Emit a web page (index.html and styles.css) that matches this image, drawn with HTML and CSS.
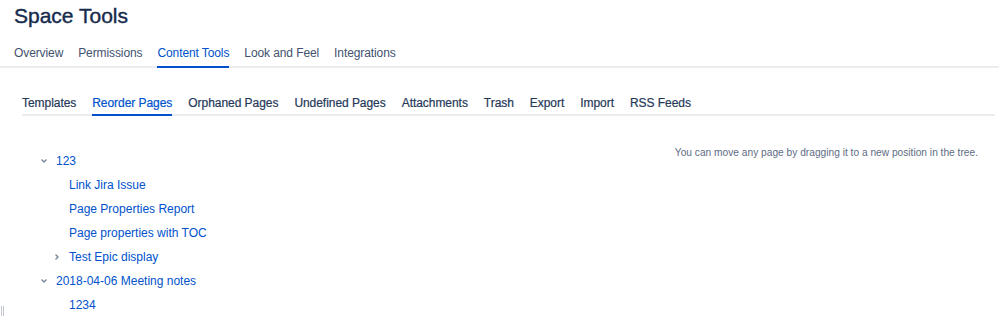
FILE: index.html
```html
<!DOCTYPE html>
<html lang="en">

<head>
    <meta charset="UTF-8">
    <title>Space Tools</title>
    <link rel="stylesheet" href="styles.css">
</head>

<body>
    <h1 class="page-title">Space Tools</h1>

    <!-- 顶部导航 -->
    <ul class="tabs">
        <li class="tab">Overview</li>
        <li class="tab">Permissions</li>
        <li class="tab active">Content Tools</li>
        <li class="tab">Look and Feel</li>
        <li class="tab">Integrations</li>
    </ul>

    <!-- 二级导航 -->
    <ul class="subtabs">
        <li class="subtab">Templates</li>
        <li class="subtab active">Reorder Pages</li>
        <li class="subtab">Orphaned Pages</li>
        <li class="subtab">Undefined Pages</li>
        <li class="subtab">Attachments</li>
        <li class="subtab">Trash</li>
        <li class="subtab">Export</li>
        <li class="subtab">Import</li>
        <li class="subtab">RSS Feeds</li>
    </ul>

    <div class="content">
        <ul class="tree">
            <li class="node depth-0">
                <span class="toggle">
                    <svg width="8" height="8" viewBox="0 0 8 8"><polyline points="1.5,2.5 4,5 6.5,2.5" /></svg>
                </span>
                <a href="#">123</a>
            </li>
            <li class="node depth-1"><span class="toggle"></span><a href="#">Link Jira Issue</a></li>
            <li class="node depth-1"><span class="toggle"></span><a href="#">Page Properties Report</a></li>
            <li class="node depth-1"><span class="toggle"></span><a href="#">Page properties with TOC</a></li>
            <li class="node depth-1">
                <span class="toggle">
                    <svg width="8" height="8" viewBox="0 0 8 8"><polyline points="2.5,1.5 5,4 2.5,6.5" /></svg>
                </span>
                <a href="#">Test Epic display</a>
            </li>
            <li class="node depth-0">
                <span class="toggle">
                    <svg width="8" height="8" viewBox="0 0 8 8"><polyline points="1.5,2.5 4,5 6.5,2.5" /></svg>
                </span>
                <a href="#">2018-04-06 Meeting notes</a>
            </li>
            <li class="node depth-1"><span class="toggle"></span><a href="#">1234</a></li>
        </ul>

        <p class="hint">You can move any page by dragging it to a new position in the tree.</p>
    </div>

    <!-- 左下角拖拽把手 -->
    <div class="grip"></div>
</body>

</html>
```

FILE: styles.css
```css
body {
    font-family: "Liberation Sans", Arial, sans-serif;
    margin: 0;
    background-color: #fff;
    color: #172b4d;
    position: relative;
    min-height: 318px;
}

.page-title {
    margin: 0;
    padding: 3px 14px 0;
    font-size: 21px;
    line-height: 26px;
    font-weight: normal;
    color: #172b4d;
    -webkit-text-stroke: 0.4px #172b4d;
}

.tabs,
.subtabs {
    list-style: none;
    margin: 0;
    padding: 0;
    display: flex;
}

/* 顶部导航 */
.tabs {
    padding: 0 0 0 14px;
    margin-top: 16px;
    gap: 15px;
    box-shadow: inset 0 -2px 0 #ebecf0;
}

.tab {
    font-size: 12px;
    line-height: 16px;
    padding: 0 0 7px;
    color: #42526e;
    letter-spacing: -0.1px;
}

.tab.active {
    color: #0052cc;
    box-shadow: inset 0 -2px 0 #0052cc;
}

/* 二级导航 */
.subtabs {
    margin: 27px 4px 0 22px;
    gap: 16px;
    box-shadow: inset 0 -2px 0 #ebecf0;
}

.subtab {
    font-size: 12px;
    line-height: 16px;
    padding: 0 0 5px;
    color: #253858;
    letter-spacing: -0.05px;
    -webkit-text-stroke: 0.2px #253858;
}

.subtab.active {
    color: #0052cc;
    -webkit-text-stroke: 0.2px #0052cc;
    box-shadow: inset 0 -2px 0 #0052cc;
}

.content {
    display: flex;
    justify-content: space-between;
    align-items: flex-start;
    padding: 33px 21px 0 0;
}

.tree {
    list-style: none;
    margin: 0;
    padding: 0;
}

.node {
    display: flex;
    align-items: center;
    height: 24px;
    font-size: 12px;
}

.node.depth-0 {
    padding-left: 38px;
}

.node.depth-1 {
    padding-left: 51px;
}

.toggle {
    width: 12px;
    height: 12px;
    margin-right: 6px;
    display: flex;
    align-items: center;
    justify-content: center;
}

.toggle svg polyline {
    fill: none;
    stroke: #7a869a;
    stroke-width: 1.4;
}

.node a {
    color: #0052cc;
    text-decoration: none;
}

.hint {
    margin: -3px 0 0;
    font-size: 10.2px;
    line-height: 14px;
    color: #5e6c84;
}

.grip {
    position: absolute;
    left: 1px;
    bottom: 2px;
    width: 1px;
    height: 10px;
    border-left: 1px solid #c1c7d0;
    border-right: 1px solid #c1c7d0;
}
```
